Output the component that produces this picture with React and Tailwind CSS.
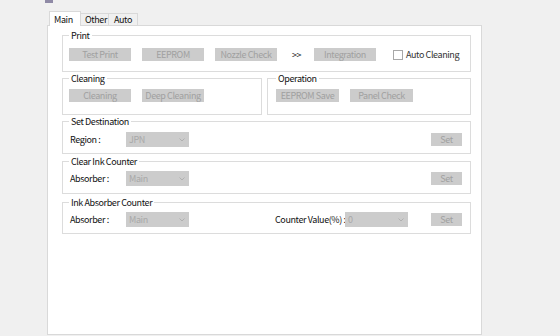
import React from 'react';

const Btn = ({ children, w = 'w-[62px]' }) => (
    <div className={`${w} h-[13px] bg-[#cccccc] text-[#a0a0a0] flex items-center justify-center leading-none shrink-0 whitespace-nowrap`}>
        {children}
    </div>
);

const Select = ({ value, w = 'w-[63px]' }) => (
    <div className={`${w} h-[15px] bg-[#cccccc] text-[#a8a8a8] flex items-center justify-between pl-[3px] pr-[4px] leading-none shrink-0`}>
        <span>{value}</span>
        <svg width="6" height="4" viewBox="0 0 6 4">
            <path d="M0.5 0.5 L3 3 L5.5 0.5" fill="none" stroke="#b0b0b0" strokeWidth="1" />
        </svg>
    </div>
);

const Group = ({ title, className = '', children }) => (
    <fieldset className={`border border-[#dcdcdc] min-w-0 ${className}`}>
        <legend className="px-[2px] leading-[13px] text-[#111] whitespace-nowrap">{title}</legend>
        {children}
    </fieldset>
);

const App = () => {
    return (
        <div className="w-[560px] h-[336px] bg-[#f0f0f0] overflow-hidden text-[9px] tracking-[-0.4px] text-[#111] whitespace-nowrap font-['Noto_Sans_CJK_JP',sans-serif]">
            <div className="ml-[45px] w-[8px] h-[3px] bg-[#8f8aa6]" />

            <div className="ml-[47px] w-[435px] mt-[8px]">
                {/* tab strip */}
                <div className="flex items-end h-[14px] pl-[2px]">
                    <div className="relative z-10 w-[32px] h-[15px] -mb-px bg-white border-t border-l border-r border-[#d9d9d9] pl-[4px] pt-[2px] leading-[11px]">
                        Main
                    </div>
                    <div className="w-[28px] h-[12px] bg-[#f0f0f0] border-t border-r border-[#d9d9d9] pl-[4px] leading-[12px]">
                        Other
                    </div>
                    <div className="w-[29px] h-[12px] bg-[#f0f0f0] border-t border-r border-[#d9d9d9] pl-[5px] leading-[12px]">
                        Auto
                    </div>
                </div>

                {/* tab page */}
                <div className="h-[310px] bg-white border border-[#d9d9d9] pt-[3px] pl-[14px] pr-[10px]">
                    <Group title="Print" className="px-[6px] pt-[6px] pb-[10px]">
                        <div className="flex items-center">
                            <Btn>Test Print</Btn>
                            <div className="ml-[11px]"><Btn>EEPROM</Btn></div>
                            <div className="ml-[11px]"><Btn>Nozzle Check</Btn></div>
                            <span className="ml-[15px] w-[10px] leading-none">&gt;&gt;</span>
                            <div className="ml-[12px]"><Btn>Integration</Btn></div>
                            <div className="ml-[17px] w-[10px] h-[10px] border border-[#a8a8a8] bg-white shrink-0" />
                            <span className="ml-[3px] leading-none text-[#333]">Auto Cleaning</span>
                        </div>
                    </Group>

                    <div className="flex gap-[5px]">
                        <Group title="Cleaning" className="w-[200px] px-[6px] pt-[4px] pb-[12px]">
                            <div className="flex items-center gap-[11px]">
                                <Btn>Cleaning</Btn>
                                <Btn>Deep Cleaning</Btn>
                            </div>
                        </Group>
                        <Group title="Operation" className="flex-1 pl-[8px] pr-[6px] pt-[4px] pb-[12px]">
                            <div className="flex items-center gap-[11px]">
                                <Btn w="w-[63px]">EEPROM Save</Btn>
                                <Btn w="w-[63px]">Panel Check</Btn>
                            </div>
                        </Group>
                    </div>

                    <Group title="Set Destination" className="pl-[6px] pr-[8px] pt-[4px] pb-[6px]">
                        <div className="flex items-center">
                            <span className="w-[57px] pl-[1px]">Region :</span>
                            <Select value="JPN" />
                            <div className="ml-auto"><Btn w="w-[31px]">Set</Btn></div>
                        </div>
                    </Group>

                    <Group title="Clear Ink Counter" className="mt-[1px] pl-[6px] pr-[8px] pt-[3px] pb-[7px]">
                        <div className="flex items-center">
                            <span className="w-[57px] pl-[1px]">Absorber :</span>
                            <Select value="Main" />
                            <div className="ml-auto"><Btn w="w-[31px]">Set</Btn></div>
                        </div>
                    </Group>

                    <Group title="Ink Absorber Counter" className="mt-[2px] pl-[6px] pr-[8px] pt-[3px] pb-[6px]">
                        <div className="flex items-center">
                            <span className="w-[57px] pl-[1px]">Absorber :</span>
                            <Select value="Main" />
                            <span className="ml-[86px] w-[70px]">Counter Value(%) :</span>
                            <Select value="0" />
                            <div className="ml-auto"><Btn w="w-[31px]">Set</Btn></div>
                        </div>
                    </Group>
                </div>
            </div>
        </div>
    );
};

export default App;
